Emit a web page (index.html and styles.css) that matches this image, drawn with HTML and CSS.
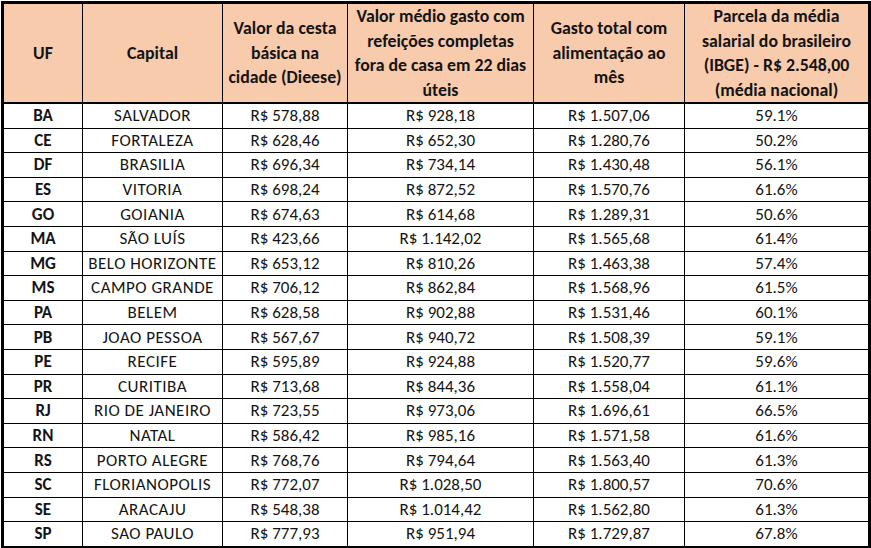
FILE: index.html
```html
<!DOCTYPE html>
<html lang="pt-BR">
<head>
<meta charset="utf-8">
<title>Gasto com alimentação por capital</title>
<link rel="stylesheet" href="styles.css">
</head>
<body>
<table class="sheet">
  <colgroup>
    <col class="c-uf"><col class="c-cap"><col class="c-cesta"><col class="c-medio"><col class="c-total"><col class="c-parcela">
  </colgroup>
  <thead>
    <tr>
      <th>UF</th>
      <th>Capital</th>
      <th>Valor da cesta<br>básica na<br>cidade (Dieese)</th>
      <th>Valor médio gasto com<br>refeições completas<br>fora de casa em 22 dias<br>úteis</th>
      <th>Gasto total com<br>alimentação ao<br>mês</th>
      <th>Parcela da média<br>salarial do brasileiro<br>(IBGE) - R$ 2.548,00<br>(média nacional)</th>
    </tr>
  </thead>
  <tbody>
    <tr><td class="uf">BA</td><td class="cap">SALVADOR</td><td>R$ 578,88</td><td>R$ 928,18</td><td>R$ 1.507,06</td><td>59.1%</td></tr>
    <tr><td class="uf">CE</td><td class="cap">FORTALEZA</td><td>R$ 628,46</td><td>R$ 652,30</td><td>R$ 1.280,76</td><td>50.2%</td></tr>
    <tr><td class="uf">DF</td><td class="cap">BRASILIA</td><td>R$ 696,34</td><td>R$ 734,14</td><td>R$ 1.430,48</td><td>56.1%</td></tr>
    <tr><td class="uf">ES</td><td class="cap">VITORIA</td><td>R$ 698,24</td><td>R$ 872,52</td><td>R$ 1.570,76</td><td>61.6%</td></tr>
    <tr><td class="uf">GO</td><td class="cap">GOIANIA</td><td>R$ 674,63</td><td>R$ 614,68</td><td>R$ 1.289,31</td><td>50.6%</td></tr>
    <tr><td class="uf">MA</td><td class="cap">SÃO LUÍS</td><td>R$ 423,66</td><td>R$ 1.142,02</td><td>R$ 1.565,68</td><td>61.4%</td></tr>
    <tr><td class="uf">MG</td><td class="cap">BELO HORIZONTE</td><td>R$ 653,12</td><td>R$ 810,26</td><td>R$ 1.463,38</td><td>57.4%</td></tr>
    <tr><td class="uf">MS</td><td class="cap">CAMPO GRANDE</td><td>R$ 706,12</td><td>R$ 862,84</td><td>R$ 1.568,96</td><td>61.5%</td></tr>
    <tr><td class="uf">PA</td><td class="cap">BELEM</td><td>R$ 628,58</td><td>R$ 902,88</td><td>R$ 1.531,46</td><td>60.1%</td></tr>
    <tr><td class="uf">PB</td><td class="cap">JOAO PESSOA</td><td>R$ 567,67</td><td>R$ 940,72</td><td>R$ 1.508,39</td><td>59.1%</td></tr>
    <tr><td class="uf">PE</td><td class="cap">RECIFE</td><td>R$ 595,89</td><td>R$ 924,88</td><td>R$ 1.520,77</td><td>59.6%</td></tr>
    <tr><td class="uf">PR</td><td class="cap">CURITIBA</td><td>R$ 713,68</td><td>R$ 844,36</td><td>R$ 1.558,04</td><td>61.1%</td></tr>
    <tr><td class="uf">RJ</td><td class="cap">RIO DE JANEIRO</td><td>R$ 723,55</td><td>R$ 973,06</td><td>R$ 1.696,61</td><td>66.5%</td></tr>
    <tr><td class="uf">RN</td><td class="cap">NATAL</td><td>R$ 586,42</td><td>R$ 985,16</td><td>R$ 1.571,58</td><td>61.6%</td></tr>
    <tr><td class="uf">RS</td><td class="cap">PORTO ALEGRE</td><td>R$ 768,76</td><td>R$ 794,64</td><td>R$ 1.563,40</td><td>61.3%</td></tr>
    <tr><td class="uf">SC</td><td class="cap">FLORIANOPOLIS</td><td>R$ 772,07</td><td>R$ 1.028,50</td><td>R$ 1.800,57</td><td>70.6%</td></tr>
    <tr><td class="uf">SE</td><td class="cap">ARACAJU</td><td>R$ 548,38</td><td>R$ 1.014,42</td><td>R$ 1.562,80</td><td>61.3%</td></tr>
    <tr><td class="uf">SP</td><td class="cap">SAO PAULO</td><td>R$ 777,93</td><td>R$ 951,94</td><td>R$ 1.729,87</td><td>67.8%</td></tr>
  </tbody>
</table>
</body>
</html>
```

FILE: styles.css
```css
html, body {
  margin: 0;
  padding: 0;
  background: #ffffff;
}

body {
  padding: 1px 0 0 1px;
}

.sheet {
  border-collapse: collapse;
  table-layout: fixed;
  width: 867px;
  border: 3px solid #000;
  font-family: Carlito, Calibri, Lato, "Liberation Sans", sans-serif;
  font-size: 17px;
  color: #141414;
}

.c-uf { width: 80px; }
.c-cap { width: 140px; }
.c-cesta { width: 125px; }
.c-medio { width: 186px; }
.c-total { width: 151px; }
.c-parcela { width: 185px; }

.sheet th {
  background: #f8cbad;
  font-weight: bold;
  font-size: 17.8px;
  line-height: 24.5px;
  height: 97px;
  padding: 0;
  border: 1px solid #000;
  border-bottom: 2px solid #000;
  vertical-align: middle;
  text-align: center;
  white-space: nowrap;
}

.sheet td {
  height: 23.6px;
  padding: 0 2px;
  border: 1px solid #000;
  text-align: center;
  vertical-align: middle;
  white-space: nowrap;
  line-height: 19px;
}

.sheet td.cap {
  letter-spacing: 0.5px;
}

.sheet td.uf {
  font-weight: bold;
}
```
